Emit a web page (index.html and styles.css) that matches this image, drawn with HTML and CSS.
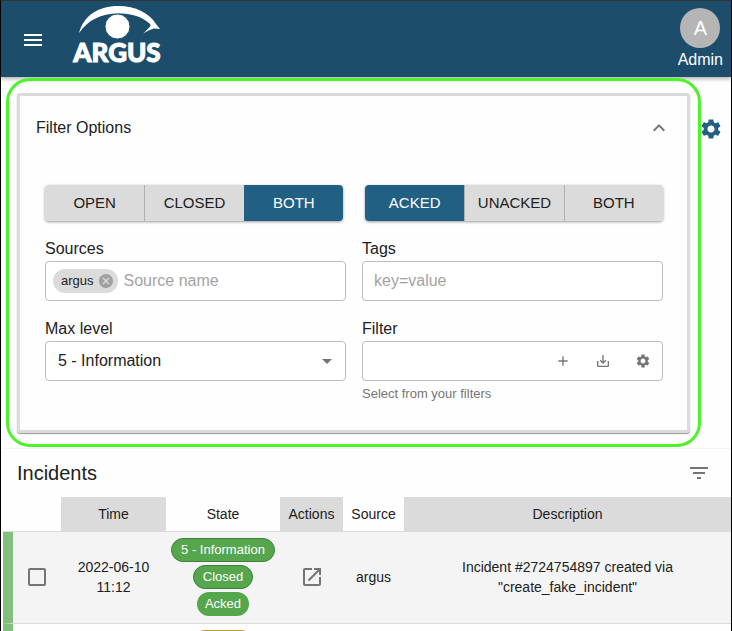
FILE: index.html
```html
<!DOCTYPE html>
<html lang="en">
<head>
<meta charset="utf-8">
<title>Argus – Incidents</title>
<link rel="stylesheet" href="styles.css">
</head>
<body>
<header class="appbar">
  <button class="icon-btn menu" type="button" aria-label="Menu">
    <svg class="icon" viewBox="0 0 24 24"><path d="M3 18h18v-2H3v2zm0-5h18v-2H3v2zm0-7v2h18V6H3z"/></svg>
  </button>
  <a class="logo" href="#">
    <svg class="eye" viewBox="70 4 94 66" role="img">
      <path d="M79 33C84 15 99 6 118 6C136 6 149 13 156 24L160 29L154 28.500C150 29.500 146 31.500 143 34C146 30.500 148.500 28.500 150 26.500C151 25.500 150.500 24.500 149.500 23.500C141 16 131 13.500 118 13.500C101 13.500 88 20 79 33Z"/>
      <circle cx="117.500" cy="26.500" r="12.500" class="pupil"/>
      <text x="117" y="62" text-anchor="middle">ARGUS</text>
    </svg>
  </a>
  <a class="account" href="#"><span class="avatar">A</span><span>Admin</span></a>
</header>

<main>
  <div class="filter-row">
    <div class="highlight">
      <section class="panel">
        <button class="panel-head" type="button" aria-expanded="true">
          <span>Filter Options</span>
          <svg class="icon" viewBox="0 0 24 24"><path d="M12 8l-6 6 1.410 1.410L12 10.830l4.590 4.580L18 14z"/></svg>
        </button>
        <div class="panel-body">
          <div class="toggles">
            <div class="group">
              <button type="button">OPEN</button><button type="button">CLOSED</button><button type="button" class="selected">BOTH</button>
            </div>
            <div class="group">
              <button type="button" class="selected">ACKED</button><button type="button">UNACKED</button><button type="button">BOTH</button>
            </div>
          </div>
          <div class="fields">
            <div class="field">
              <label for="sources">Sources</label>
              <div class="box with-chip">
                <span class="tag">argus
                  <svg viewBox="2 2 20 20"><path d="M12 2C6.470 2 2 6.470 2 12s4.470 10 10 10 10-4.470 10-10S17.530 2 12 2zm5 13.590L15.590 17 12 13.410 8.410 17 7 15.590 10.590 12 7 8.410 8.410 7 12 10.590 15.590 7 17 8.410 13.410 12 17 15.590z"/></svg>
                </span>
                <input id="sources" type="text" placeholder="Source name">
              </div>
            </div>
            <div class="field">
              <label for="tags">Tags</label>
              <div class="box"><input id="tags" type="text" placeholder="key=value"></div>
            </div>
            <div class="field">
              <label for="level">Max level</label>
              <div class="box select-box">
                <select id="level"><option>5 - Information</option></select>
                <svg class="icon" viewBox="0 0 24 24"><path d="M7 10l5 5 5-5z"/></svg>
              </div>
            </div>
            <div class="field">
              <label for="filter">Filter</label>
              <div class="box filter-box">
                <input id="filter" type="text">
                <button class="icon-btn" type="button" aria-label="Add"><svg viewBox="0 0 24 24"><path d="M19 13h-6v6h-2v-6H5v-2h6V5h2v6h6v2z"/></svg></button>
                <button class="icon-btn" type="button" aria-label="Save"><svg viewBox="0 0 24 24"><path d="M19 12v7H5v-7H3v7c0 1.100.900 2 2 2h14c1.100 0 2-.900 2-2v-7h-2zm-6 .670l2.590-2.580L17 11.500l-5 5-5-5 1.410-1.410L11 12.670V3h2z"/></svg></button>
                <button class="icon-btn" type="button" aria-label="Manage"><svg viewBox="0 0 24 24"><use href="#gear"/></svg></button>
              </div>
              <p class="help">Select from your filters</p>
            </div>
          </div>
        </div>
      </section>
    </div>
    <button class="icon-btn settings" type="button" aria-label="Settings">
      <svg viewBox="2 2 20 20"><path id="gear" d="M19.140 12.940c.040-.300.060-.610.060-.940 0-.320-.020-.640-.070-.940l2.030-1.580c.180-.140.230-.410.120-.610l-1.920-3.320c-.120-.220-.370-.290-.590-.220l-2.390.960c-.500-.380-1.030-.700-1.620-.940l-.360-2.540c-.040-.240-.240-.410-.480-.410h-3.840c-.240 0-.430.170-.470.410l-.360 2.540c-.590.240-1.130.570-1.620.940l-2.390-.960c-.220-.080-.470 0-.590.220L2.740 8.870c-.120.210-.080.470.120.610l2.030 1.580c-.050.300-.090.630-.090.940s.020.640.070.940l-2.030 1.580c-.180.140-.230.410-.120.610l1.920 3.320c.120.220.370.290.590.220l2.390-.960c.500.380 1.030.700 1.620.940l.360 2.540c.050.240.240.410.480.410h3.840c.240 0 .440-.170.470-.410l.360-2.540c.590-.240 1.130-.560 1.620-.940l2.390.960c.220.080.470 0 .590-.220l1.920-3.320c.120-.220.070-.470-.120-.610l-2.010-1.580zM12 15.600c-1.980 0-3.600-1.620-3.600-3.600s1.620-3.600 3.600-3.600 3.600 1.620 3.600 3.600-1.620 3.600-3.600 3.600z"/></svg>
    </button>
  </div>

  <section class="incidents">
    <div class="toolbar">
      <h1>Incidents</h1>
      <button class="icon-btn" type="button" aria-label="Filter list"><svg class="icon" viewBox="0 0 24 24"><path d="M10 18h4v-2h-4v2zM3 6v2h18V6H3zm3 7h12v-2H6v2z"/></svg></button>
    </div>
    <table>
      <colgroup><col class="c-check"><col class="c-time"><col class="c-state"><col class="c-actions"><col class="c-source"><col></colgroup>
      <thead>
        <tr><th></th><th class="shade">Time</th><th>State</th><th class="shade">Actions</th><th>Source</th><th class="shade">Description</th></tr>
      </thead>
      <tbody>
        <tr class="acked">
          <td class="check"><input type="checkbox" aria-label="Select incident"></td>
          <td>2022-06-10 11:12</td>
          <td><div class="chips"><span class="chip outlined">5 - Information</span><span class="chip outlined">Closed</span><span class="chip">Acked</span></div></td>
          <td><a class="open" href="#" aria-label="Open"><svg class="icon" viewBox="0 0 24 24"><path d="M19 19H5V5h7V3H5c-1.110 0-2 .900-2 2v14c0 1.100.890 2 2 2h14c1.100 0 2-.900 2-2v-7h-2v7zM14 3v2h3.590l-9.830 9.830 1.410 1.410L19 6.410V10h2V3h-7z"/></svg></a></td>
          <td>argus</td>
          <td class="desc">Incident #2724754897 created via "create_fake_incident"</td>
        </tr>
        <tr>
          <td class="check"></td><td></td>
          <td><div class="chips"><span class="chip warn"></span></div></td>
          <td></td><td></td><td></td>
        </tr>
      </tbody>
    </table>
  </section>
</main>
</body>
</html>
```
FILE: styles.css
```css
* { box-sizing: border-box; }

body {
  margin: 0;
  height: 100vh;
  overflow: hidden;
  border: 1px solid #000;
  border-top-color: #333;
  border-bottom: 0;
  background: #fefefe;
  color: #212121;
  font: 16px/24px "Liberation Sans", Arial, sans-serif;
}

button, input, select { font: inherit; color: inherit; }
button { border: 0; padding: 0; background: none; cursor: pointer; }
a { color: inherit; text-decoration: none; }
svg { display: block; fill: currentColor; }
.icon { width: 24px; height: 24px; }
.icon-btn { display: grid; place-items: center; color: #757575; }

/* App bar */
.appbar {
  display: flex;
  align-items: center;
  height: 76px;
  padding: 2px 8px 0 20px;
  background: #1c4e6b;
  color: #fff;
  box-shadow: 0 2px 4px rgba(0, 0, 0, .3);
}
.menu { color: #fff; }
.logo { margin: 0 auto 6px 25px; }
.eye { width: 94px; height: 66px; }
.eye text { font: 900 26px Lato, sans-serif; stroke: #fff; stroke-width: 1; }
.pupil { stroke: #1c4e6b; stroke-width: 1; }
.account { display: flex; flex-direction: column; align-items: center; }
.avatar {
  width: 40px;
  height: 40px;
  border-radius: 50%;
  background: #b5b5b5;
  font-size: 20px;
  line-height: 40px;
  text-align: center;
}

/* Filter panel */
.filter-row { display: flex; align-items: flex-start; padding: 1px 10px 0 5px; }
.highlight {
  flex: 1;
  min-width: 0;
  padding: 12px 8px 11px;
  border: 3px solid #4df32b;
  border-radius: 24px;
}
.settings { margin-top: 41px; color: #215f83; }
.settings svg { width: 20px; height: 20px; }
.panel {
  border: 3px solid #dbdbdb;
  border-radius: 3px;
  background: #fefefe;
  box-shadow: 0 1px 1px rgba(0, 0, 0, .4);
}
.panel-head {
  display: flex;
  justify-content: space-between;
  align-items: center;
  width: 100%;
  height: 64px;
  padding: 0 16px;
}
.panel-head svg { color: #757575; }
.panel-body { padding: 25px 24px 26px 25px; }
.toggles { display: grid; grid-template-columns: repeat(2, minmax(0, 1fr)); gap: 22px; margin-bottom: 16px; }
.group {
  display: grid;
  grid-template-columns: repeat(3, minmax(0, 1fr));
  overflow: hidden;
  border-radius: 4px;
  box-shadow: 0 1px 3px rgba(0, 0, 0, .4);
}
.group button { height: 36px; background: #dbdbdb; font-size: 15px; }
.group button + button { border-left: 1px solid #b0b0b0; }
.group .selected, .group button + .selected { background: #215f83; border-color: #215f83; color: #fff; }

.fields { display: grid; grid-template-columns: repeat(2, minmax(0, 1fr)); gap: 16px; }
.field label { display: block; }
.box {
  display: flex;
  align-items: center;
  height: 40px;
  padding: 0 11px;
  border: 1px solid #bdbdbd;
  border-radius: 4px;
  background: #fff;
}
.box input { flex: 1; min-width: 0; padding: 0; border: 0; outline: 0; background: none; }
.box input::placeholder { color: #a3a3a3; opacity: 1; }
.with-chip { padding: 0 7px; gap: 6px; }
.tag {
  display: flex;
  align-items: center;
  gap: 5px;
  height: 24px;
  padding: 0 5px 0 8px;
  border-radius: 12px;
  background: #dbdbdb;
  font-size: 13px;
}
.tag svg { width: 14px; height: 14px; color: #a0a0a0; }
.select-box { padding: 0 6px 0 12px; }
.select-box select { flex: 1; border: 0; outline: 0; background: none; appearance: none; }
.select-box svg { color: #757575; }
.filter-box { gap: 24px; }
.filter-box svg { width: 16px; height: 16px; }
.help { margin: 3px 0 0; color: #757575; font-size: 13px; line-height: 20px; }

/* Incident table */
.incidents { margin: 1px 0 0 2px; border-top: 1px solid #f4f4f4; }
.toolbar { display: flex; align-items: center; justify-content: space-between; height: 48px; padding: 0 20px 0 14px; }
h1 { margin: 0; font-size: 20px; font-weight: 400; }
table { width: 100%; table-layout: fixed; border-spacing: 0; font-size: 14px; line-height: 20px; text-align: center; }
.c-check { width: 58px; }
.c-time { width: 105px; }
.c-state { width: 114px; }
.c-actions { width: 63px; }
.c-source { width: 61px; }
th { height: 35px; padding: 0; border-bottom: 1px solid #dbdbdb; font-weight: 400; }
.shade { background: #dbdbdb; }
td { padding: 6px 4px 7px; border-bottom: 1px solid #dbdbdb; }
.acked { background: #f4f4f4; }
.check { padding: 0 0 1px; border-left: 10px solid #82c07d; }
.check input {
  display: block;
  width: 18px;
  height: 18px;
  margin: auto;
  border: 2px solid #757575;
  border-radius: 2px;
  appearance: none;
}
.chips { display: flex; flex-direction: column; align-items: center; gap: 3px; }
.chip {
  height: 24px;
  min-width: 50px;
  padding: 0 8px;
  border-radius: 12px;
  background: #55a64c;
  color: #fff;
  font-size: 13px;
  line-height: 24px;
  white-space: nowrap;
}
.outlined { padding: 0 9px; border: 1px solid #3f7f3b; line-height: 22px; }
.warn { min-width: 60px; background: #c49b1f; }
.open { display: grid; place-items: center; color: #757575; }
.desc { padding: 6px 48px 7px; }
```
